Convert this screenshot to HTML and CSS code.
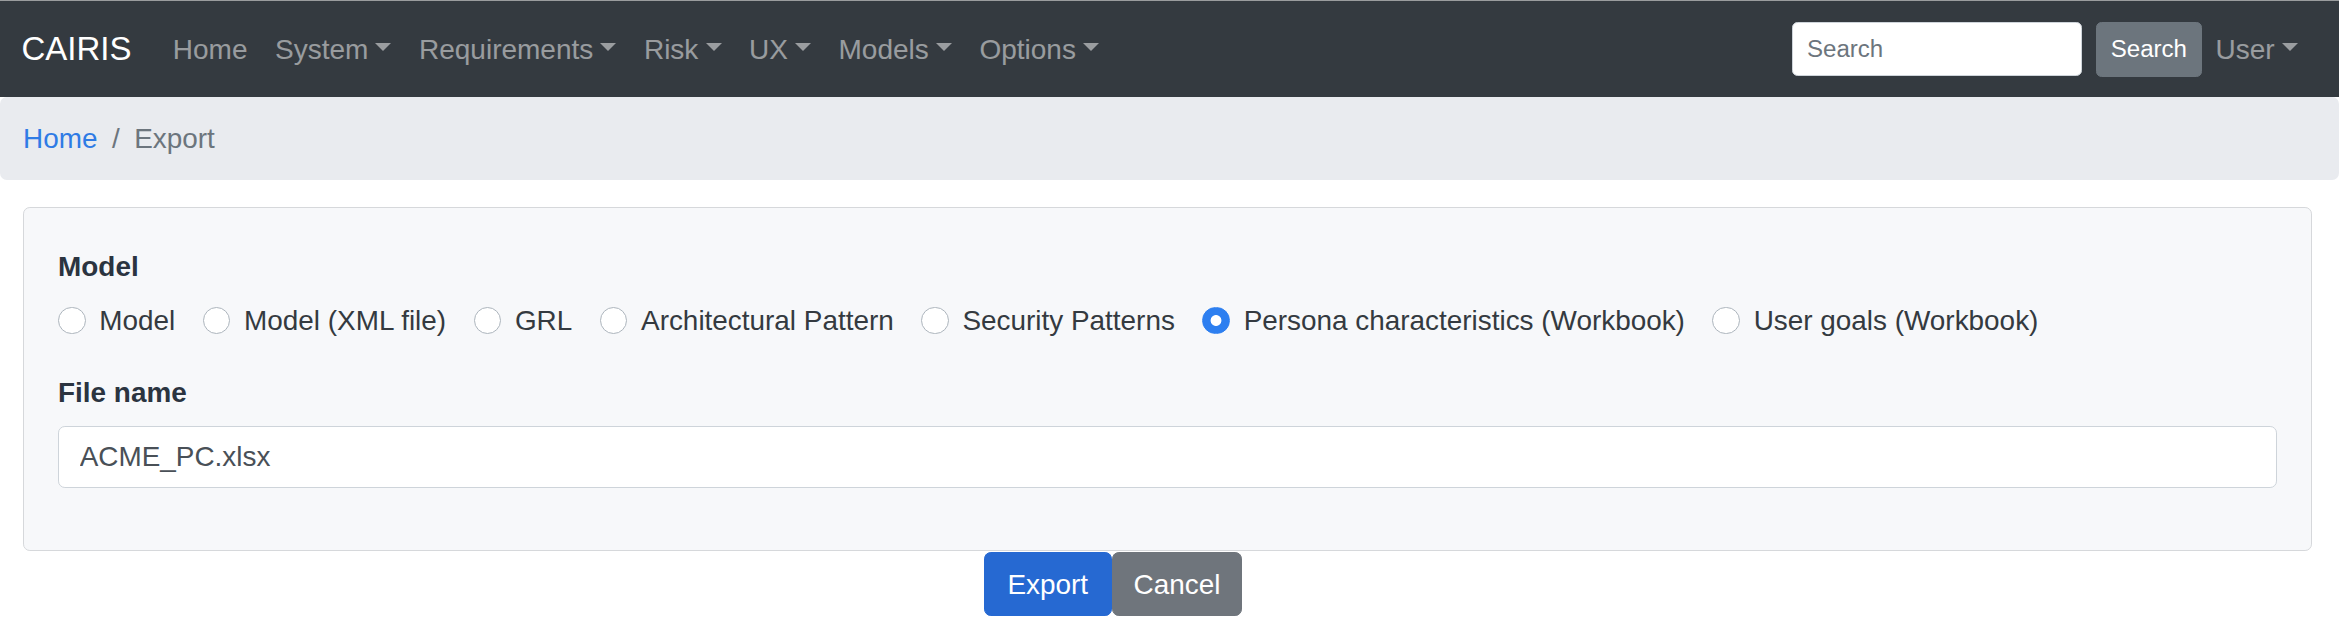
FILE: index.html
```html
<!DOCTYPE html>
<html lang="en">
<head>
<meta charset="utf-8">
<title>CAIRIS - Export</title>
<link rel="stylesheet" href="styles.css">
</head>
<body>
<nav class="navbar">
  <a class="brand" href="#">CAIRIS</a>
  <ul class="nav">
    <li><a class="nav-link" href="#">Home</a></li>
    <li><a class="nav-link caret" href="#">System</a></li>
    <li><a class="nav-link caret" href="#">Requirements</a></li>
    <li><a class="nav-link caret" href="#">Risk</a></li>
    <li><a class="nav-link caret" href="#">UX</a></li>
    <li><a class="nav-link caret" href="#">Models</a></li>
    <li><a class="nav-link caret" href="#">Options</a></li>
  </ul>
  <div class="nav-right">
    <form class="search-form">
      <input class="search-input" type="text" placeholder="Search">
      <button class="search-btn" type="button">Search</button>
    </form>
    <a class="nav-link caret" href="#">User</a>
  </div>
</nav>

<ol class="breadcrumb">
  <li><a class="crumb-link" href="#">Home</a></li>
  <li class="crumb-sep">/</li>
  <li class="crumb-active">Export</li>
</ol>

<div class="card">
  <div class="group">
    <span class="group-label">Model</span>
    <div class="radio-row">
      <label class="radio"><input type="radio" name="model"><span>Model</span></label>
      <label class="radio"><input type="radio" name="model"><span>Model (XML file)</span></label>
      <label class="radio"><input type="radio" name="model"><span>GRL</span></label>
      <label class="radio"><input type="radio" name="model"><span>Architectural Pattern</span></label>
      <label class="radio"><input type="radio" name="model"><span>Security Patterns</span></label>
      <label class="radio"><input type="radio" name="model" checked><span>Persona characteristics (Workbook)</span></label>
      <label class="radio"><input type="radio" name="model"><span>User goals (Workbook)</span></label>
    </div>
  </div>
  <div class="group">
    <label class="group-label" for="fname">File name</label>
    <input class="text-input" id="fname" type="text" value="ACME_PC.xlsx">
  </div>
</div>

<div class="actions">
  <button class="btn btn-primary" type="button">Export</button>
  <button class="btn btn-secondary" type="button">Cancel</button>
</div>
</body>
</html>
```

FILE: styles.css
```css
html {
  font-size: 27.52px;
}

body {
  margin: 0;
  font-family: "Liberation Sans", Arial, Helvetica, sans-serif;
  font-size: 27.9px;
  line-height: 41.28px;
  color: #212529;
  background: #fff;
}

a {
  text-decoration: none;
}

/* ---------- navbar ---------- */
.navbar {
  display: flex;
  align-items: center;
  background: #343a40;
  border-top: 1px solid #9a9c9e;
  padding: 13.76px 27.52px 13.76px 21.5px;
}

.brand {
  font-size: 33px;
  line-height: 49.5px;
  color: #fff;
  margin-right: 27.52px;
  padding: 8.6px 0;
}

.nav {
  display: flex;
  list-style: none;
  margin: 0;
  padding: 0;
}

.nav-link {
  display: block;
  padding: 13.76px;
  font-size: 28px;
  color: rgba(255, 255, 255, 0.5);
  white-space: nowrap;
}

.caret::after {
  content: "";
  display: inline-block;
  margin-left: 0.255em;
  vertical-align: 0.255em;
  border-top: 0.3em solid;
  border-right: 0.3em solid transparent;
  border-left: 0.3em solid transparent;
}

.nav-right {
  margin-left: auto;
  display: flex;
  align-items: center;
}

.search-form {
  display: flex;
  align-items: center;
  margin: 0;
}

.search-input {
  box-sizing: border-box;
  width: 290px;
  height: 54px;
  margin-right: 13.76px;
  padding: 0 13.76px;
  font-family: inherit;
  font-size: 24.08px;
  color: #495057;
  background: #fff;
  border: 1.72px solid #ced4da;
  border-radius: 5.5px;
}

.search-input::placeholder {
  color: #6c757d;
}

.search-btn {
  box-sizing: border-box;
  height: 55px;
  padding: 0 13.76px;
  font-family: inherit;
  font-size: 24.08px;
  color: #fff;
  background: #6c757d;
  border: 1.72px solid #6c757d;
  border-radius: 5.5px;
}

/* ---------- breadcrumb ---------- */
.breadcrumb {
  display: flex;
  list-style: none;
  margin: 0 0 27.52px;
  padding: 20.64px 23px;
  background: #e9ebef;
  border-radius: 6.88px;
}

.crumb-link {
  color: #2f7be5;
}

.crumb-sep {
  padding: 0 14.5px;
  color: #6c757d;
}

.crumb-active {
  color: #6c757d;
}

/* ---------- card / form ---------- */
.card {
  margin: 0 27px 0 22.7px;
  padding: 34.4px;
  background: #f7f8fa;
  border: 1.72px solid #d6d8db;
  border-radius: 6.88px;
}

.group {
  margin-bottom: 27.52px;
}

.group-label {
  display: block;
  padding-top: 3px;
  margin-bottom: 13px;
  font-weight: 700;
  color: #2b3440;
}

.radio-row {
  display: flex;
  flex-wrap: wrap;
}

.radio {
  display: inline-flex;
  align-items: flex-start;
  margin-right: 27.52px;
  color: #343a40;
}

.radio input {
  appearance: none;
  -webkit-appearance: none;
  box-sizing: border-box;
  flex: none;
  width: 27.52px;
  height: 27.52px;
  margin: 6.88px 13.76px 0 0;
  border: 1.72px solid #adb5bd;
  border-radius: 50%;
  background: #fff;
}

.radio input:checked {
  border-color: #2d7ff0;
  background: radial-gradient(circle, #fff 0 5px, #2d7ff0 5.8px);
}

.text-input {
  display: block;
  box-sizing: border-box;
  width: 100%;
  height: 62px;
  padding: 0 20.64px;
  font-family: inherit;
  font-size: 27.9px;
  color: #495057;
  background: #fff;
  border: 1.72px solid #ced4da;
  border-radius: 6.88px;
}

/* ---------- actions ---------- */
.actions {
  display: flex;
  padding-left: 984px;
  margin-top: 1.5px;
}

.btn {
  font-family: inherit;
  font-size: 27.9px;
  line-height: 41.28px;
  padding: 10.32px 21px;
  color: #fff;
  border: 1.72px solid transparent;
  border-radius: 6.88px;
  margin: 0;
}

.btn-primary {
  background: #2669d2;
  border-color: #2669d2;
  padding-right: 22.5px;
  padding-left: 22.5px;
}

.btn-secondary {
  background: #6f757c;
  border-color: #6f757c;
}
```
